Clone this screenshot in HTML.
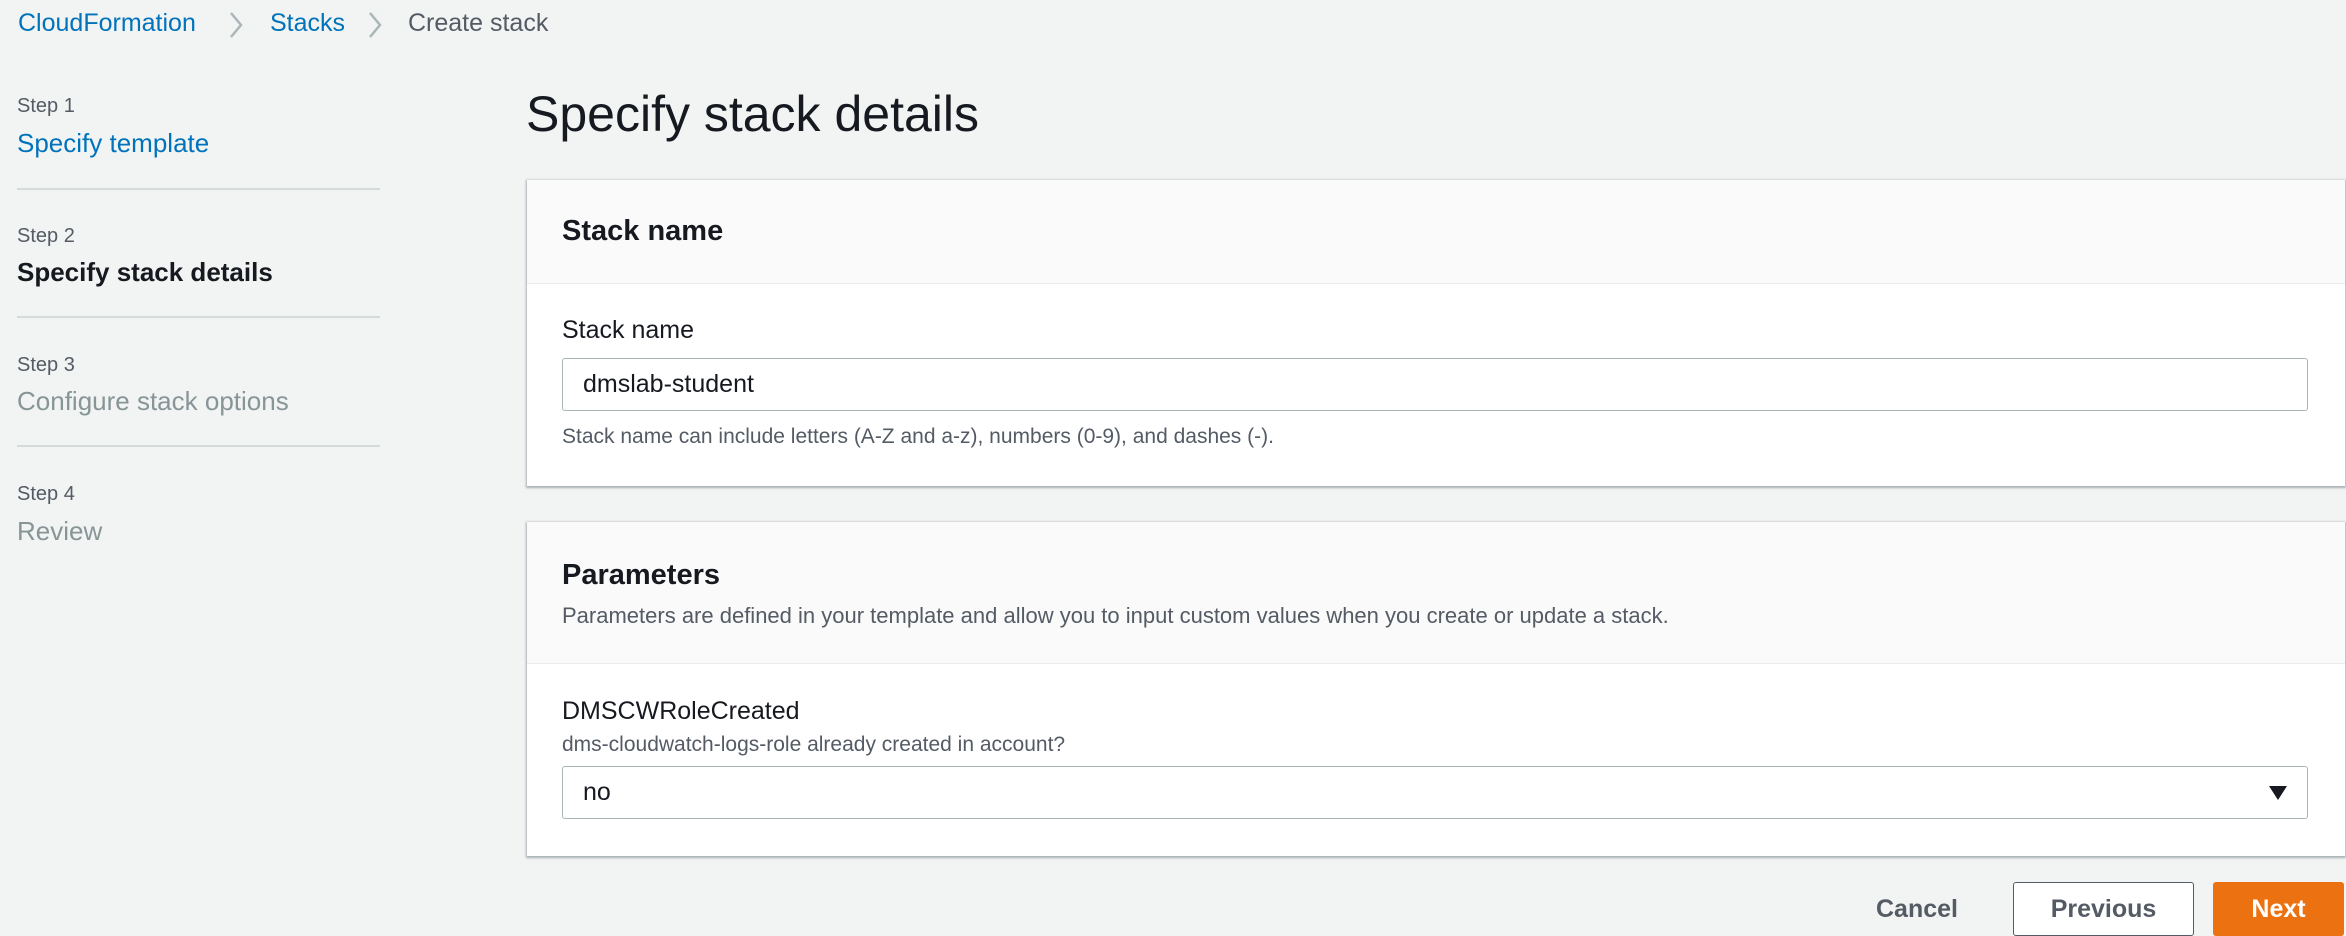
<!DOCTYPE html>
<html><head><meta charset="utf-8"><style>
*{margin:0;padding:0;box-sizing:border-box}
body{width:2346px;height:936px;background:#f2f3f3;font-family:"Liberation Sans",sans-serif;color:#16191f;position:relative;overflow:hidden}
.a{position:absolute;white-space:nowrap}
.link{color:#0073bb}
.step{font-size:20px;color:#545b64}
.hr{position:absolute;left:17px;width:363px;height:2px;background:#d5dbdb}
.panel{position:absolute;left:527px;width:1818px;background:#fff;box-shadow:0 1px 2px 1px rgba(0,28,36,.3)}
.ph{background:#fafafa;border-bottom:1px solid #eaeded;position:relative}
.inp{position:absolute;left:35px;width:1746px;height:53px;border:1px solid #aab7b8;border-radius:3px;font-size:25px;padding:0 20px;line-height:51px}
</style></head><body>
<div class="a link" style="left:18px;top:9px;font-size:25px">CloudFormation</div>
<svg class="a" style="left:228px;top:11px" width="16" height="28"><path d="M3 2 L13 14 L3 26" stroke="#aab7b8" stroke-width="2.5" fill="none"/></svg>
<div class="a link" style="left:270px;top:9px;font-size:25px">Stacks</div>
<svg class="a" style="left:367px;top:11px" width="16" height="28"><path d="M3 2 L13 14 L3 26" stroke="#aab7b8" stroke-width="2.5" fill="none"/></svg>
<div class="a" style="left:408px;top:9px;font-size:25px;color:#545b64">Create stack</div>

<div class="a step" style="left:17px;top:95px">Step 1</div>
<div class="a link" style="left:17px;top:128px;font-size:26px">Specify template</div>
<div class="hr" style="top:188px"></div>
<div class="a step" style="left:17px;top:225px">Step 2</div>
<div class="a" style="left:17px;top:257px;font-size:26px;font-weight:bold">Specify stack details</div>
<div class="hr" style="top:316px"></div>
<div class="a step" style="left:17px;top:354px">Step 3</div>
<div class="a" style="left:17px;top:386px;font-size:26px;color:#879596">Configure stack options</div>
<div class="hr" style="top:445px"></div>
<div class="a step" style="left:17px;top:483px">Step 4</div>
<div class="a" style="left:17px;top:516px;font-size:26px;color:#879596">Review</div>

<div class="a" style="left:526px;top:85px;font-size:50px">Specify stack details</div>

<div class="panel" style="top:180px;height:306px">
 <div class="ph" style="height:104px"><div class="a" style="left:35px;top:35px;font-size:29px;font-weight:bold">Stack name</div></div>
 <div class="a" style="left:35px;top:136px;font-size:25px">Stack name</div>
 <div class="inp" style="top:178px">dmslab-student</div>
 <div class="a" style="left:35px;top:245px;font-size:21px;color:#545b64">Stack name can include letters (A-Z and a-z), numbers (0-9), and dashes (-).</div>
</div>

<div class="panel" style="top:522px;height:334px">
 <div class="ph" style="height:142px">
  <div class="a" style="left:35px;top:37px;font-size:29px;font-weight:bold">Parameters</div>
  <div class="a" style="left:35px;top:81px;font-size:22px;color:#545b64">Parameters are defined in your template and allow you to input custom values when you create or update a stack.</div>
 </div>
 <div class="a" style="left:35px;top:175px;font-size:25px">DMSCWRoleCreated</div>
 <div class="a" style="left:35px;top:211px;font-size:21px;color:#545b64">dms-cloudwatch-logs-role already created in account?</div>
 <div class="inp" style="top:244px">no<svg style="position:absolute;right:20px;top:18px" width="18" height="16"><path d="M0 1 H18 L9 15 Z" fill="#16191f"/></svg></div>
</div>

<div class="a" style="left:1876px;top:895px;font-size:25px;font-weight:bold;color:#545b64">Cancel</div>
<div class="a" style="left:2013px;top:882px;width:181px;height:54px;border:1px solid #545b64;border-radius:3px;background:#fff;font-size:25px;font-weight:bold;color:#545b64;text-align:center;line-height:52px">Previous</div>
<div class="a" style="left:2213px;top:882px;width:131px;height:54px;border-radius:3px;background:#ec7211;font-size:25px;font-weight:bold;color:#fff;text-align:center;line-height:54px">Next</div>
</body></html>
